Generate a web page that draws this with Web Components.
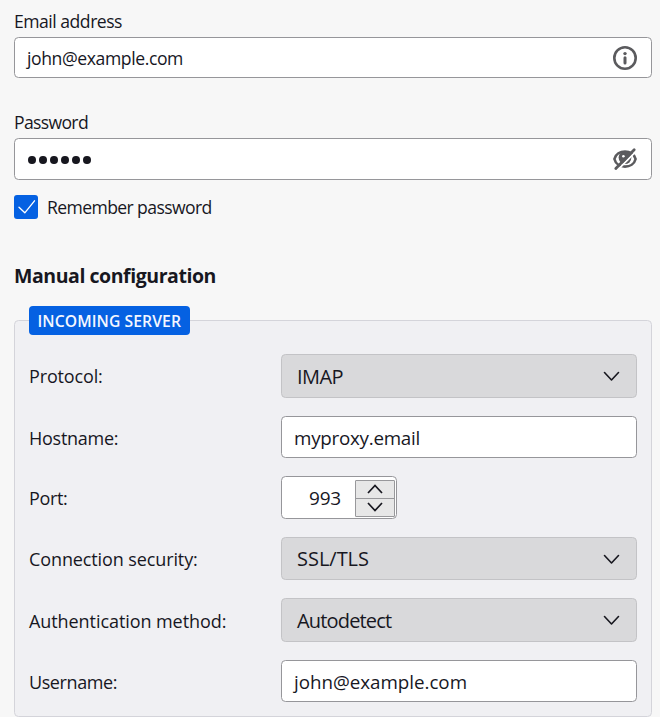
<!DOCTYPE html>
<html lang="en">
<head>
<meta charset="utf-8">
<title>Account setup</title>
<style>
html{background:#f7f7f7}
body{margin:0;height:717px;overflow:hidden;color:#17171f;font:17.6px/24px "Open Sans","Noto Sans",sans-serif}
</style>
</head>
<body>
<account-form></account-form>
<script>
const define = (name, html, ready) => customElements.define(name, class extends HTMLElement {
  connectedCallback() {
    if (this.shadowRoot) return;
    this.attachShadow({mode: 'open'}).innerHTML = '<style>*{box-sizing:border-box}</style>' + html;
    if (ready) ready(this, this.shadowRoot);
  }
});

// One line of text, tracked so that it fills the advance width given in "w".
define('ui-text', `<style>:host{display:block;white-space:nowrap}span{display:inline-block}</style><span><slot></slot></span>`, (el, root) => {
  const span = root.querySelector('span');
  const fit = () => {
    const n = el.textContent.length;
    span.style.letterSpacing = (Number(el.getAttribute('w')) - span.getBoundingClientRect().width) / n + 'px';
  };
  fit();
});

define('ui-input', `<style>
:host{display:flex;align-items:center;justify-content:space-between;box-sizing:border-box;height:42px;background:#fff;border:1px solid #96969a;border-radius:4.5px;padding:0 14px 0 12px}
</style><slot></slot><slot name="icon"></slot>`);

define('ui-select', `<style>
:host{display:flex;align-items:center;justify-content:space-between;box-sizing:border-box;height:100%;background:#d9d9db;border:1px solid #c3c3c6;border-radius:4.5px;padding:1px 16px 0 15px;font-size:20px}
</style><slot></slot><svg width="17" height="11" viewBox="0 0 17 11" fill="none" stroke="#17171f" stroke-width="1.6" stroke-linecap="round" stroke-linejoin="round"><path d="M1.5 1.5 8.5 9l7-7.5"/></svg>`);

define('ui-stepper', `<style>
:host{display:flex;align-items:center;justify-content:flex-end;box-sizing:border-box;width:116px;height:43px;background:#fff;border:1px solid #96969a;border-radius:4.5px;padding:1px 1px 0 0;gap:14px;font-size:19px}
.b{display:grid;grid-template-rows:17px 17px;gap:1px;width:40px;height:37px;border:1px solid #98989b;background:#98989b;border-radius:1px}
i{display:grid;place-items:center;background:#e7e7e7}
</style><slot></slot><div class="b"><i><svg width="16" height="10" viewBox="0 0 16 10" fill="none" stroke="#17171f" stroke-width="1.7"><path d="M1 9 8 1.5 15 9"/></svg></i><i><svg width="16" height="10" viewBox="0 0 16 10" fill="none" stroke="#17171f" stroke-width="1.7"><path d="M1 1 8 8.5 15 1"/></svg></i></div>`);

define('ui-check', `<style>
:host{display:flex;align-items:center;gap:9px;height:24px}
.c{width:24px;height:24px;border-radius:3px;background:#0561e2;display:block}
</style><svg class="c" viewBox="0 0 24 24" fill="none" stroke="#fff" stroke-width="1.35" stroke-linecap="round" stroke-linejoin="round"><path d="M5 12.3 10.8 17.8 20.5 5.8"/></svg><slot></slot>`);

define('icon-info', `<style>:host,svg{display:block}</style><svg width="24" height="24" viewBox="0 0 24 24"><circle cx="12" cy="12" r="10.7" fill="none" stroke="#5b5b5e" stroke-width="2.6"/><circle cx="12" cy="7.6" r="1.7" fill="#5b5b5e"/><path d="M12 11.8v5.2" stroke="#5b5b5e" stroke-width="3" stroke-linecap="round"/></svg>`);

define('icon-eye-off', `<style>:host,svg{display:block}</style><svg width="24" height="24" viewBox="0 0 24 24">
<path d="M1.4 12C3.8 1.9 20.2 1.9 22.6 12 20.2 22.1 3.8 22.1 1.4 12Z" fill="none" stroke="#5b5b5e" stroke-width="2.6"/>
<circle cx="12" cy="10.6" r="6.4" fill="#5b5b5e"/>
<circle cx="10.4" cy="9.2" r="1.3" fill="#fff"/>
<path d="M4.6 23 23 4.4" stroke="#fff" stroke-width="1.8"/>
<path d="M2.8 21.4 21.2 2.8" stroke="#5b5b5e" stroke-width="2.8" stroke-linecap="round"/></svg>`);

define('password-dots', `<style>:host{display:flex;gap:2.8px;padding:2px 0 0 1px}i{width:8.2px;height:8.6px;border-radius:50%;background:#17171f}</style>` + '<i></i>'.repeat(6));

define('server-group', `<style>
:host{display:block;box-sizing:border-box;height:397px;border:1px solid #d4d4da;border-radius:4.5px;background:#f0f0f3;padding:0 14px;font-size:18px}
.l{display:flex;align-items:center;width:161px;height:29px;margin-top:-15px;padding:1px 0 0 8.5px;border-radius:4px;background:#0561e2;color:#f4f7ff;font-size:15.7px;font-weight:600}
.g{display:grid;grid-template-columns:252px 356px;grid-template-rows:44px 42px 43px 43px 44px 42px;row-gap:18px;align-items:center;margin-top:19px}
</style><div class="l"><slot name="legend"></slot></div><div class="g"><slot></slot></div>`);

define('account-form', `<style>
:host{display:flex;flex-direction:column;padding:9px 8px 0 14px}
.h{font-size:19.5px;font-weight:700;margin:45px 0 32px}
server-group ui-input{font-size:18.8px;padding-top:1px}
</style>
<ui-text w="108">Email address</ui-text>
<ui-input style="height:41px;margin-top:4px"><ui-text w="156">john@example.com</ui-text><icon-info slot="icon"></icon-info></ui-input>
<ui-text w="74" style="margin-top:32px">Password</ui-text>
<ui-input style="margin-top:4px"><password-dots></password-dots><icon-eye-off slot="icon"></icon-eye-off></ui-input>
<ui-check style="margin-top:15px"><ui-text w="164.7">Remember password</ui-text></ui-check>
<ui-text class="h" w="202">Manual configuration</ui-text>
<server-group>
<ui-text slot="legend" w="143.5">INCOMING SERVER</ui-text>
<ui-text w="73.7">Protocol:</ui-text><ui-select><ui-text w="46">IMAP</ui-text></ui-select>
<ui-text w="89.3" style="padding-top:1px">Hostname:</ui-text><ui-input><ui-text w="126">myproxy.email</ui-text></ui-input>
<ui-text w="38.5">Port:</ui-text><ui-stepper><ui-text w="32">993</ui-text></ui-stepper>
<ui-text w="168.7">Connection security:</ui-text><ui-select><ui-text w="72">SSL/TLS</ui-text></ui-select>
<ui-text w="197.3" style="padding-top:2px">Authentication method:</ui-text><ui-select><ui-text w="94.3">Autodetect</ui-text></ui-select>
<ui-text w="88" style="padding-top:1px">Username:</ui-text><ui-input><ui-text w="173">john@example.com</ui-text></ui-input>
</server-group>`);
</script>
</body>
</html>
